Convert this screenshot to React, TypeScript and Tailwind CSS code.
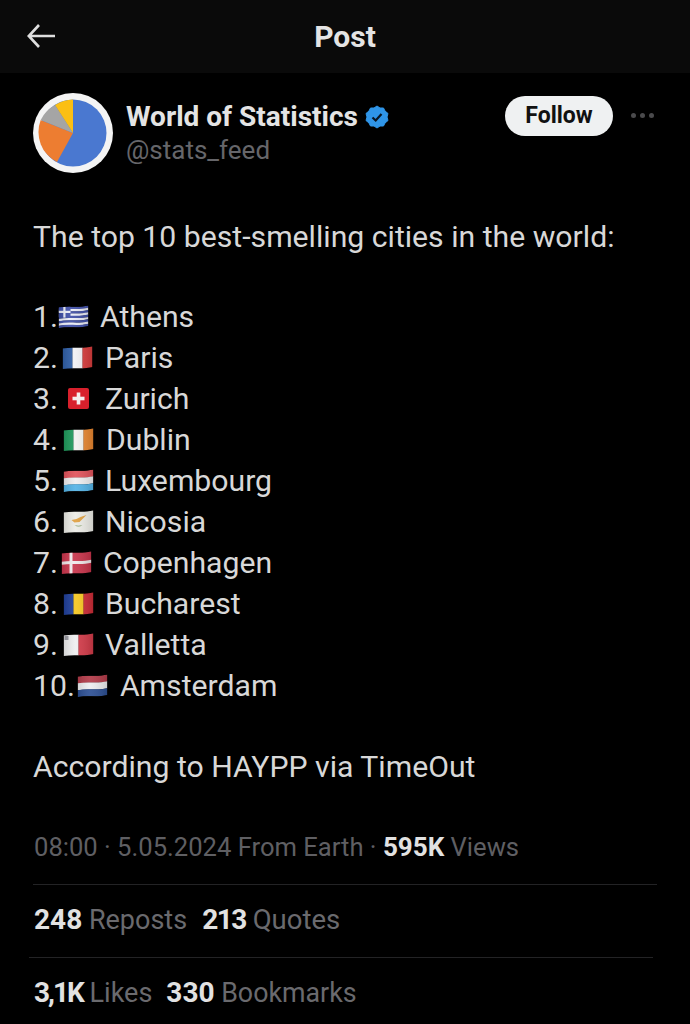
import React from "react";

const wave = (y: number) => `C10 ${y - 1}, 20 ${y + 1.5}, 30 ${y - 1}`;
const waveBack = (y: number) => `C20 ${y + 1.5}, 10 ${y - 1}, 0 ${y + 1}`;
const band = (y0: number, y1: number) => `M0 ${y0 + 1} ${wave(y0)} L30 ${y1 - 1} ${waveBack(y1)} Z`;

const HBands = ({ colors }: { colors: string[] }) => (
  <>
    {colors.map((c, i) => (
      <path key={i} d={band(1.5 + (i * 20.5) / colors.length, 1.5 + ((i + 1) * 20.5) / colors.length + 0.2)} fill={c} />
    ))}
  </>
);

const VBands = ({ colors }: { colors: string[] }) => (
  <>
    {colors.map((c, i) => (
      <rect key={i} x={(i * 30) / colors.length} y="0" width={30 / colors.length + 0.2} height="23" fill={c} />
    ))}
  </>
);

const flagArt: Record<string, React.ReactNode> = {
  gr: (
    <>
      <HBands colors={["#3f4fa8", "#eceef8", "#3f4fa8", "#eceef8", "#3f4fa8", "#eceef8", "#3f4fa8", "#eceef8", "#3f4fa8"]} />
      <rect x="0" y="1" width="12" height="11.6" fill="#3f4fa8" />
      <rect x="4.8" y="1" width="2.2" height="11.6" fill="#eceef8" />
      <rect x="0" y="5.8" width="12" height="2.2" fill="#eceef8" />
    </>
  ),
  fr: <VBands colors={["#2f5fa8", "#f1f1f4", "#d83c3c"]} />,
  ie: <VBands colors={["#1f9a5c", "#f1f1ee", "#e8862f"]} />,
  lu: <HBands colors={["#e0525a", "#efeff0", "#53b3e6"]} />,
  cy: (
    <>
      <rect width="30" height="23" fill="#ecece6" />
      <path d="M8 10 L13 9 L17 7 L23 5 L19 9 L16 12 L11 12.5 Z" fill="#e0a040" />
      <path d="M11 15 Q15 18 19 15 Q15 16.5 11 15 Z" fill="#7a9a60" />
    </>
  ),
  dk: (
    <>
      <rect width="30" height="23" fill="#c8334a" />
      <rect x="8" y="0" width="3" height="23" fill="#f0e8ea" />
      <path d={band(9.8, 12.8)} fill="#f0e8ea" />
    </>
  ),
  ro: <VBands colors={["#1f3f9a", "#f5c71f", "#cc2b36"]} />,
  mt: (
    <>
      <VBands colors={["#efeff0", "#d23a48"]} />
      <rect x="1" y="3" width="4" height="4" fill="#9a9aa2" />
    </>
  ),
  nl: <HBands colors={["#b23a48", "#eeeef0", "#2c4f94"]} />,
};

const Flag = ({ code }: { code: string }) => (
  <svg viewBox="0 0 30 23" className="h-[23px] w-[31px] shrink-0" aria-hidden="true">
    <defs>
      <clipPath id={`clip-${code}`}>
        <path d={band(1.5, 22)} />
      </clipPath>
      <linearGradient id={`sheen-${code}`} x1="0" x2="1" y1="0" y2="0">
        <stop offset="0" stopColor="#000" stopOpacity="0.12" />
        <stop offset="0.4" stopColor="#fff" stopOpacity="0.08" />
        <stop offset="1" stopColor="#000" stopOpacity="0.14" />
      </linearGradient>
    </defs>
    <g clipPath={`url(#clip-${code})`}>
      {flagArt[code]}
      <rect width="30" height="23" fill={`url(#sheen-${code})`} />
    </g>
  </svg>
);

const SwissFlag = () => (
  <svg viewBox="0 0 21 21" className="h-[21px] w-[21px] shrink-0" aria-hidden="true">
    <rect x="0" y="0" width="21" height="21" rx="2" fill="#d8202c" />
    <rect x="8.7" y="4.5" width="3.6" height="12" fill="#f5eeee" />
    <rect x="4.5" y="8.7" width="12" height="3.6" fill="#f5eeee" />
  </svg>
);

const cities = [
  { n: "1.", code: "gr", name: "Athens", flag: "ml-0", gap: "ml-[11px]" },
  { n: "2.", code: "fr", name: "Paris", flag: "ml-[4px]", gap: "ml-[12px]" },
  { n: "3.", code: "ch", name: "Zurich", flag: "ml-[10px]", gap: "ml-[16px]" },
  { n: "4.", code: "ie", name: "Dublin", flag: "ml-[5px]", gap: "ml-[12px]" },
  { n: "5.", code: "lu", name: "Luxembourg", flag: "ml-[5px]", gap: "ml-[11px]" },
  { n: "6.", code: "cy", name: "Nicosia", flag: "ml-[5px]", gap: "ml-[11px]" },
  { n: "7.", code: "dk", name: "Copenhagen", flag: "ml-[3px]", gap: "ml-[11px]" },
  { n: "8.", code: "ro", name: "Bucharest", flag: "ml-[5px]", gap: "ml-[11px]" },
  { n: "9.", code: "mt", name: "Valletta", flag: "ml-[5px]", gap: "ml-[11px]" },
  { n: "10.", code: "nl", name: "Amsterdam", flag: "ml-[2px]", gap: "ml-[12px]" },
];

const Stat = ({
  value,
  label,
  className = "",
  valueClass = "",
  labelClass = "",
}: {
  value: string;
  label: string;
  className?: string;
  valueClass?: string;
  labelClass?: string;
}) => (
  <span className={className}>
    <span className={`text-[28px] font-bold text-[#e2e2e2] ${valueClass}`}>{value}</span>
    <span className={`text-[#6a6a6e] ${labelClass}`}> {label}</span>
  </span>
);

export default function App() {
  return (
    <div className="h-[1024px] w-[690px] overflow-hidden bg-black font-['Roboto',sans-serif] text-[#e4e4e4]">
      <header className="relative flex h-[73px] items-center justify-center bg-[#0a0a0a]">
        <svg viewBox="0 0 28 24" className="absolute left-[27px] top-[24px] h-[24px] w-[28px]" fill="none" stroke="#dedede" strokeWidth="2.6" aria-hidden="true">
          <path d="M12 1 L1.8 12 L12 23 M2 12 H28" />
        </svg>
        <h1 className="text-[30px] font-bold leading-none text-[#e4e4e4]">Post</h1>
      </header>

      <section className="flex items-start pl-[33px] pt-[20px]">
        <svg viewBox="0 0 80 80" className="h-[80px] w-[80px] shrink-0" aria-hidden="true">
          <circle cx="40" cy="40" r="40" fill="#f4f4f4" />
          <circle cx="40" cy="40" r="33.5" fill="#4a78d0" />
          <path d="M40 40 L24 69 A33.5 33.5 0 0 1 7.7 27 Z" fill="#ed7d31" />
          <path d="M40 40 L7.7 27 A33.5 33.5 0 0 1 22 12 Z" fill="#a5a5a5" />
          <path d="M40 40 L22 12 A33.5 33.5 0 0 1 40 6.5 Z" fill="#fbbf14" />
        </svg>
        <div className="ml-[13px] w-[379px] pt-[8px]">
          <div className="flex h-[32px] items-center">
            <span className="text-[28px] font-bold leading-none text-[#e4e4e4]">World of Statistics</span>
            <svg viewBox="0 0 24 24" className="ml-[7px] h-[24px] w-[24px]" aria-hidden="true">
              <path d="M12 1 L15 3 L18.5 3 L20 6 L23 8.5 L22 12 L23 15.5 L20 18 L18.5 21 L15 21 L12 23 L9 21 L5.5 21 L4 18 L1 15.5 L2 12 L1 8.5 L4 6 L5.5 3 L9 3 Z" fill="#2f95e8" stroke="#2f95e8" strokeWidth="1" strokeLinejoin="round" />
              <path d="M7.5 12.5 L10.7 15.5 L16.5 9" fill="none" stroke="#0b1622" strokeWidth="2.2" />
            </svg>
          </div>
          <div className="mt-[1px] text-[26px] leading-[32px] text-[#66666a]">@stats_feed</div>
        </div>
        <button className="mt-[3px] flex h-[40px] w-[108px] items-center justify-center rounded-full bg-[#eff1f2] text-[23px] font-bold text-[#111]">
          Follow
        </button>
        <div className="ml-[18px] mt-[20px] flex gap-[4px]">
          <span className="h-[5px] w-[5px] rounded-full bg-[#4a4a4c]" />
          <span className="h-[5px] w-[5px] rounded-full bg-[#4a4a4c]" />
          <span className="h-[5px] w-[5px] rounded-full bg-[#4a4a4c]" />
        </div>
      </section>

      <main className="pl-[33px] pt-[43px] text-[30.2px] leading-[41px] text-[#d8d8d8]">
        <p>The top 10 best-smelling cities in the world:</p>
        <ol className="mt-[39px]">
          {cities.map((c) => (
            <li key={c.n} className="flex h-[41px] items-center">
              <span>{c.n}</span>
              <span className={c.flag}>{c.code === "ch" ? <SwissFlag /> : <Flag code={c.code} />}</span>
              <span className={c.gap}>{c.name}</span>
            </li>
          ))}
        </ol>
        <p className="mt-[40px]">According to HAYPP via TimeOut</p>
      </main>

      <footer className="pt-[40px] text-[27px] leading-[40px]">
        <div className="pl-[34px] text-[25.6px] text-[#5f5f63]">
          08:00 · 5.05.2024 From Earth · <span className="text-[26px] font-bold text-[#e2e2e2]">595K</span> Views
        </div>
        <div className="ml-[33px] mr-[33px] mt-[17px] border-t border-[#232325]" />
        <div className="flex pl-[34px] pt-[15px]">
          <Stat value="248" label="Reposts" />
          <Stat value="213" label="Quotes" className="ml-[15px]" valueClass="tracking-[-1.5px]" labelClass="text-[27.5px]" />
        </div>
        <div className="ml-[29px] mr-[37px] mt-[17px] border-t border-[#232325]" />
        <div className="flex pl-[34px] pt-[15px]">
          <Stat value="3,1K" label="Likes" valueClass="tracking-[-2px]" />
          <Stat value="330" label="Bookmarks" className="ml-[14px]" labelClass="text-[26.8px]" />
        </div>
      </footer>
    </div>
  );
}
